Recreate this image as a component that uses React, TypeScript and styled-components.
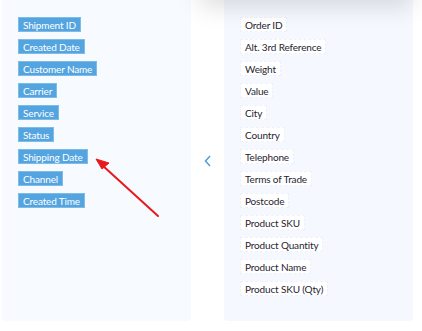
import React from "react";
import styled, { createGlobalStyle } from "styled-components";

const Global = createGlobalStyle`
  html, body { margin: 0; padding: 0; background: #ffffff; }
  body { font-family: "Lato", "Liberation Sans", sans-serif; overflow: hidden; }
`;

const Page = styled.div`
  position: relative;
  width: 422px;
  height: 331px;
  overflow: hidden;
  display: flex;
  align-items: flex-start;
  padding-left: 2px;
  box-sizing: border-box;
`;

const TopShadow = styled.div`
  position: absolute;
  top: -30px;
  left: 200px;
  width: 212px;
  height: 30px;
  box-shadow: 0 6px 24px rgba(0, 0, 0, 0.14);
  background: #fff;
`;

const Panel = styled.div<{ $tone: string; $top: number }>`
  width: 189px;
  height: 321px;
  background: ${(p) => p.$tone};
  border-radius: 0 0 4px 4px;
  box-sizing: border-box;
  padding: ${(p) => p.$top}px 0 0 16px;
  display: flex;
  flex-direction: column;
  align-items: flex-start;
  gap: 7px;
`;

const Gap = styled.div`
  width: 33px;
  height: 321px;
  display: flex;
  align-items: center;
  justify-content: center;
  color: #4b9ee0;
`;

const SelectedTag = styled.div`
  height: 15px;
  line-height: 14px;
  padding: 0 4px;
  background: #54a4e0;
  border: 1px solid #7dbbe9;
  box-sizing: border-box;
  color: #ffffff;
  font-size: 10px;
  letter-spacing: -0.15px;
  white-space: nowrap;
`;

const AvailableTag = styled.div`
  height: 15px;
  line-height: 14px;
  padding: 0 4px;
  background: #ffffff;
  border: 1px dashed #eef2f8;
  box-sizing: border-box;
  color: #1f2430;
  font-size: 10px;
  letter-spacing: -0.15px;
  white-space: nowrap;
`;

const Arrow = styled.svg`
  position: absolute;
  left: 0;
  top: 0;
  pointer-events: none;
`;

const selected = [
  "Shipment ID",
  "Created Date",
  "Customer Name",
  "Carrier",
  "Service",
  "Status",
  "Shipping Date",
  "Channel",
  "Created Time",
];

const available = [
  "Order ID",
  "Alt. 3rd Reference",
  "Weight",
  "Value",
  "City",
  "Country",
  "Telephone",
  "Terms of Trade",
  "Postcode",
  "Product SKU",
  "Product Quantity",
  "Product Name",
  "Product SKU (Qty)",
];

export default function App() {
  return (
    <>
      <Global />
      <Page>
        <Panel $tone="#f7faff" $top={17}>
          {selected.map((s) => (
            <SelectedTag key={s}>{s}</SelectedTag>
          ))}
        </Panel>
        <Gap>
          <svg width="8" height="12" viewBox="0 0 8 12">
            <path d="M6 1 L1.5 6 L6 11" fill="none" stroke="currentColor" strokeWidth="1.5" />
          </svg>
        </Gap>
        <Panel $tone="#f5f8fe" $top={17}>
          {available.map((s) => (
            <AvailableTag key={s}>{s}</AvailableTag>
          ))}
        </Panel>
        <TopShadow />
        <Arrow width="422" height="331" viewBox="0 0 422 331">
          <line x1="158" y1="216" x2="102" y2="165" stroke="#e8191b" strokeWidth="2" strokeLinecap="round" />
          <path d="M96 159 L109 163 L102 169 Z" fill="#e8191b" stroke="#e8191b" strokeWidth="1" strokeLinejoin="round" />
        </Arrow>
      </Page>
    </>
  );
}
